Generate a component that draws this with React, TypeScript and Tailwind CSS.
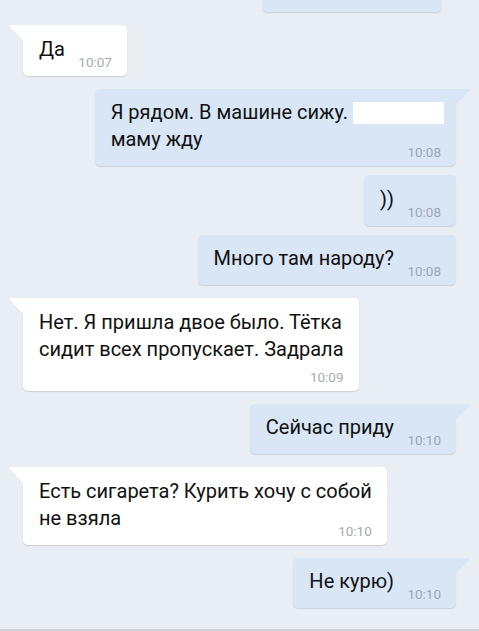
import React from "react";

type Msg = {
  out: boolean;
  lines: React.ReactNode[];
  time: string;
  tail?: boolean;
  ownLine?: boolean;
};

const messages: Msg[] = [
  { out: false, lines: ["Да"], time: "10:07", tail: true },
  {
    out: true,
    tail: true,
    lines: [
      <>
        Я рядом. В машине сижу.{" "}
        <span className="relative z-10 inline-block w-[91px] h-[22px] bg-white align-[-5px]" />
        <span className="-ml-[7px]">,</span>
      </>,
      "маму жду",
    ],
    time: "10:08",
  },
  { out: true, lines: ["))"], time: "10:08" },
  { out: true, lines: ["Много там народу?"], time: "10:08" },
  {
    out: false,
    tail: true,
    ownLine: true,
    lines: ["Нет. Я пришла двое было. Тётка", "сидит всех пропускает. Задрала"],
    time: "10:09",
  },
  { out: true, tail: true, lines: ["Сейчас приду"], time: "10:10" },
  {
    out: false,
    tail: true,
    lines: ["Есть сигарета? Курить хочу с собой", "не взяла"],
    time: "10:10",
  },
  { out: true, tail: true, lines: ["Не курю)"], time: "10:10" },
];

function Bubble({ m }: { m: Msg }) {
  const bg = m.out ? "bg-[#d9e6f6]" : "bg-white";
  const fill = m.out ? "#d9e6f6" : "#ffffff";
  return (
    <div className={`flex ${m.out ? "justify-end pr-[23px]" : "justify-start pl-[23px]"}`}>
      <div
        className={`relative rounded-[5px] pl-[16px] pr-[15px] pt-[10.5px] pb-[13px] shadow-[0_1px_1px_rgba(0,0,0,0.12)] ${bg} ${
          m.tail ? (m.out ? "rounded-tr-none" : "rounded-tl-none") : ""
        }`}
      >
        {m.tail && m.out && (
          <svg className="absolute left-full top-0" width="14" height="15" viewBox="0 0 14 15">
            <path d="M0 0 H12 Q14.5 0 13 2 L1 14.5 L0 15 Z" fill={fill} />
          </svg>
        )}
        {m.tail && !m.out && (
          <svg className="absolute right-full top-0" width="14" height="15" viewBox="0 0 14 15">
            <path d="M14 0 H2 Q-0.5 0 1 2 L13 14.5 L14 15 Z" fill={fill} />
          </svg>
        )}
        <div className="whitespace-nowrap text-[20px] leading-[15px] text-[#111]">
          {m.lines.map((l, i) => (
            <React.Fragment key={i}>
              {i > 0 && <br />}
              <span className="leading-[27px]">{l}</span>
            </React.Fragment>
          ))}
          {m.ownLine && <br />}
          <span className="inline-block w-[47px]" />
        </div>
        <span
          className={`absolute right-[15px] bottom-[7px] text-[13.5px] leading-[14px] ${
            m.out ? "text-[#9ba6b3]" : "text-[#a7abb0]"
          }`}
        >
          {m.time}
        </span>
      </div>
    </div>
  );
}

export default function App() {
  return (
    <div className="w-[479px] h-[631px] overflow-hidden bg-[#e9eef4] flex flex-col font-['Roboto',sans-serif]">
      <div className="flex-1 flex flex-col">
        {/* cut off bubble at the top */}
        <div className="flex justify-end pr-[37px]">
          <div className="w-[180px] h-[12px] rounded-b-[5px] bg-[#d9e6f6] shadow-[0_1px_1px_rgba(0,0,0,0.12)]" />
        </div>
        {messages.map((m, i) => (
          <div key={i} className={m.tail ? "mt-[13px]" : "mt-[9px]"}>
            <Bubble m={m} />
          </div>
        ))}
      </div>
      <div className="h-[2px] bg-[#cfd3d8]" />
    </div>
  );
}
